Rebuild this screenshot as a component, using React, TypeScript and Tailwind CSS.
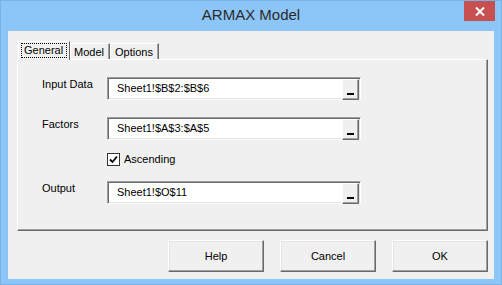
export default function App() {
  const ui = { fontFamily: '"Liberation Sans", Arial, sans-serif' };

  const Field = ({ value }: { value: string }) => (
    <div className="flex h-[23px] w-[254px] border border-t-[#a0a0a0] border-l-[#a0a0a0] border-r-white border-b-white bg-white shadow-[inset_1px_1px_0_#696969,inset_-1px_-1px_0_#e3e3e3]">
      <div className="flex-1 pl-[9px] pt-[4px] text-[11px] leading-[13px] text-black">{value}</div>
      <div className="mt-[1px] mr-[1px] h-[21px] w-[17px] border border-t-white border-l-white border-r-[#696969] border-b-[#696969] bg-[#f0f0f0] shadow-[inset_-1px_-1px_0_#a0a0a0] flex items-end justify-start pl-[4px] pb-[4px]">
        <div className="h-[2px] w-[7px] bg-black" />
      </div>
    </div>
  );

  const Row = ({ label, value }: { label: string; value: string }) => (
    <div className="flex items-start">
      <div className="w-[65px] pt-[1px] text-[11px] leading-[13px] text-black">{label}</div>
      <Field value={value} />
    </div>
  );

  const Btn = ({ label }: { label: string }) => (
    <button className="h-[32px] w-[96px] border border-t-white border-l-white border-r-[#696969] border-b-[#696969] bg-[#f0f0f0] shadow-[inset_-1px_-1px_0_#a0a0a0,inset_1px_1px_0_#e3e3e3] text-[11px] text-black">
      {label}
    </button>
  );

  return (
    <div style={ui} className="w-[502px] h-[285px] border border-[#79b3e6] bg-[#8cc5f7] flex flex-col">
      {/* title bar */}
      <div className="relative h-[30px] flex items-center justify-center">
        <span className="text-[15px] text-[#2b2b2b] -mt-[2px]">ARMAX Model</span>
        <div className="absolute right-[6px] top-0 h-[20px] w-[31px] bg-[#c75050] flex items-center justify-center">
          <svg width="10" height="9" viewBox="0 0 10 9">
            <path d="M1 0.5 L9 8.5 M9 0.5 L1 8.5" stroke="white" strokeWidth="2" />
          </svg>
        </div>
      </div>

      {/* client area */}
      <div className="mx-[7px] h-[248px] bg-[#f0f0f0] flex flex-col">
        {/* tabs */}
        <div className="flex items-end pl-[10px] pt-[9px] h-[28px]">
          <div className="relative z-10 -mb-[1px] h-[19px] w-[52px] border-t border-l border-t-white border-l-white border-r border-r-[#696969] bg-[#f0f0f0] px-[2px] pt-[1px]">
            <div className="h-[15px] border border-dotted border-black text-[11px] leading-[13px] text-black pl-[2px]">General</div>
          </div>
          <div className="h-[16px] w-[40px] border-t border-l border-t-white border-l-white border-r border-r-[#696969] shadow-[inset_-1px_0_0_#a0a0a0] text-[11px] leading-[13px] text-black pl-[3px] pt-[2px]">Model</div>
          <div className="h-[16px] w-[49px] border-t border-l border-t-white border-l-white border-r border-r-[#696969] shadow-[inset_-1px_0_0_#a0a0a0] text-[11px] leading-[13px] text-black pl-[4px] pt-[2px]">Options</div>
        </div>

        {/* panel */}
        <div className="ml-[9px] mr-[6px] h-[172px] border border-t-white border-l-white border-r-[#696969] border-b-[#696969] shadow-[inset_-1px_-1px_0_#a0a0a0] pl-[24px] pt-[17px] flex flex-col">
          <Row label="Input Data" value="Sheet1!$B$2:$B$6" />
          <div className="h-[17px]" />
          <Row label="Factors" value="Sheet1!$A$3:$A$5" />
          <div className="h-[12px]" />
          <div className="flex items-center pl-[65px] h-[14px]">
            <div className="h-[13px] w-[13px] border border-[#333] bg-white flex items-center justify-center">
              <svg width="9" height="9" viewBox="0 0 9 9">
                <path d="M1 4.5 L3.5 7 L8 1.5" stroke="black" strokeWidth="1.8" fill="none" />
              </svg>
            </div>
            <span className="ml-[4px] text-[11px] leading-[13px] text-black">Ascending</span>
          </div>
          <div className="h-[15px]" />
          <Row label="Output" value="Sheet1!$O$11" />
        </div>

        {/* buttons */}
        <div className="mt-[9px] mr-[6px] flex justify-end gap-[16px]">
          <Btn label="Help" />
          <Btn label="Cancel" />
          <Btn label="OK" />
        </div>
      </div>
    </div>
  );
}
